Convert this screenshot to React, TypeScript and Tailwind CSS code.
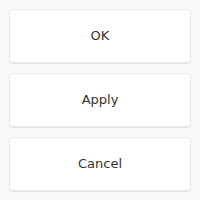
export default function App() {
  const labels = ["OK", "Apply", "Cancel"];
  return (
    <div className="flex h-[200px] w-[200px] flex-col gap-[10px] bg-[#f8f8f8] p-[9px] font-['DejaVu_Sans',sans-serif]">
      {labels.map((label) => (
        <button
          key={label}
          className="flex h-[54px] w-full items-center justify-center rounded-[4px] border border-[#ebebeb] bg-white text-[13px] text-[#333] shadow-[0_1px_1px_rgba(0,0,0,0.08)]"
        >
          {label}
        </button>
      ))}
    </div>
  );
}
